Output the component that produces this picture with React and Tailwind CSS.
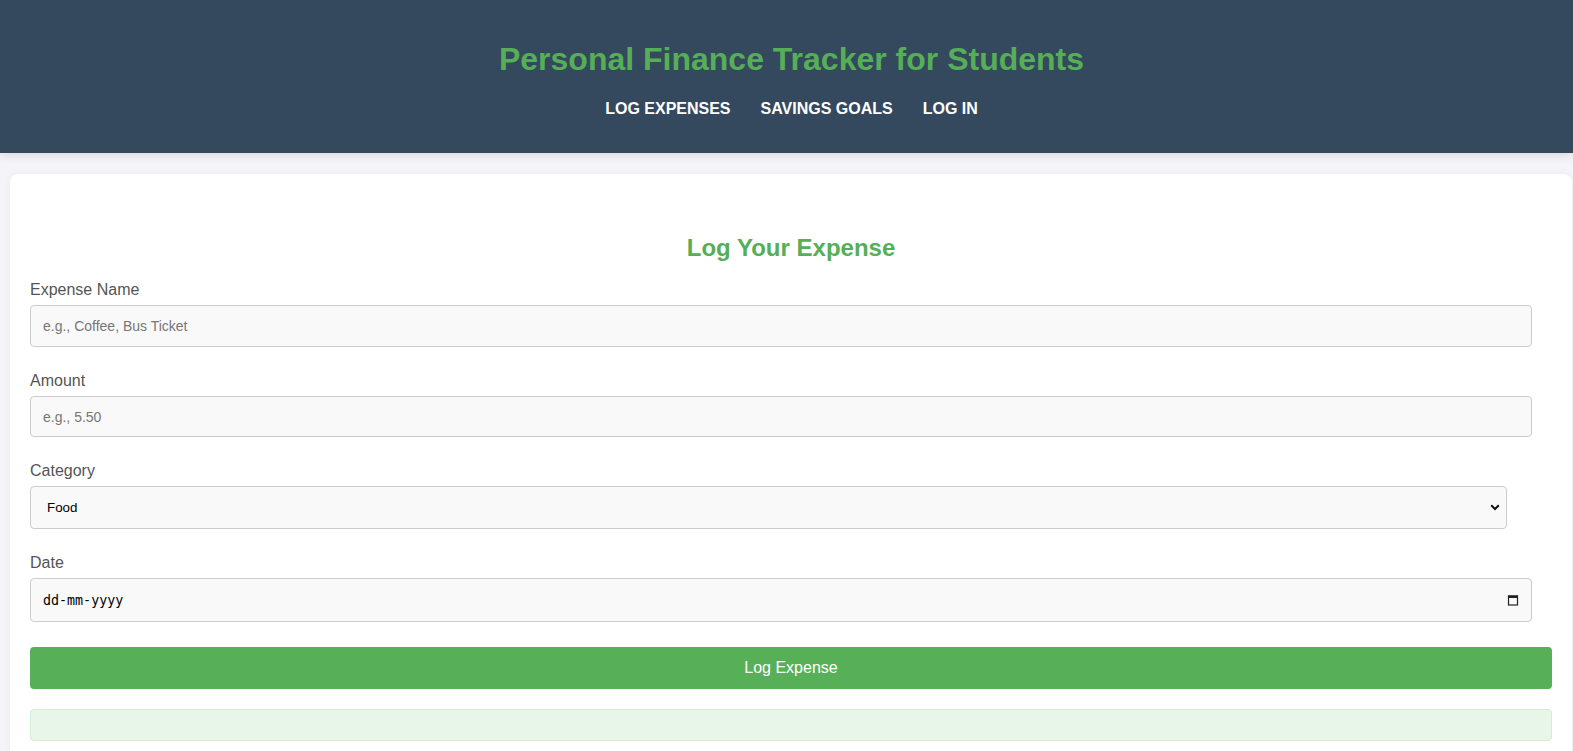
import React, { useState } from "react";

/* ================= Data ================= */

const NAV_LINKS = ["Log Expenses", "Savings Goals", "Log In"];
const CATEGORIES = ["Food", "Transport", "Entertainment", "Books", "Other"];

export default function App() {
  const [name, setName] = useState("");
  const [amount, setAmount] = useState("");
  const [category, setCategory] = useState("Food");
  const [date, setDate] = useState("");

  return (
    <div className="min-h-screen bg-[#f4f4f9] font-['Liberation_Sans',Arial,sans-serif] overflow-hidden">
      {/* ===== Header ===== */}
      <header className="relative z-10 bg-[#34495e] pt-[41px] pb-[35px] pl-[10px] text-center shadow-[0_2px_10px_rgba(0,0,0,0.12)]">
        <h1 className="text-[32px] leading-[37px] font-bold text-[#56ae57] mb-[22px]">
          Personal Finance Tracker for Students
        </h1>
        <nav className="flex justify-center gap-[30px] text-[16px] leading-[18px] font-bold uppercase text-white">
          {NAV_LINKS.map((l) => (
            <a key={l} href="#" className="text-white">
              {l}
            </a>
          ))}
        </nav>
      </header>

      {/* ===== Form Card ===== */}
      <main className="mt-[21px] ml-[10px] w-[1562px] bg-white rounded-[8px] shadow-[0_0_8px_rgba(0,0,0,0.05)] pt-[60px] pl-[20px] pr-[20px] pb-[20px]">
        <h2 className="text-center text-[24px] leading-[28px] font-bold text-[#56ae57] mb-[19px]">
          Log Your Expense
        </h2>

        <Field label="Expense Name">
          <input
            type="text"
            value={name}
            onChange={(e) => setName(e.target.value)}
            placeholder="e.g., Coffee, Bus Ticket"
            className="w-[1502px] h-[42px] px-[12px] text-[14px] bg-[#f9f9f9] border border-[#ccc] rounded-[4px] text-black placeholder:text-[#767676] outline-none"
          />
        </Field>

        <Field label="Amount">
          <input
            type="text"
            value={amount}
            onChange={(e) => setAmount(e.target.value)}
            placeholder="e.g., 5.50"
            className="w-[1502px] h-[41px] px-[12px] text-[14px] bg-[#f9f9f9] border border-[#ccc] rounded-[4px] text-black placeholder:text-[#767676] outline-none"
          />
        </Field>

        <Field label="Category">
          <div className="relative w-[1477px]">
            <select
              value={category}
              onChange={(e) => setCategory(e.target.value)}
              className="appearance-none w-full h-[43px] pl-[16px] pr-[30px] text-[13.33px] bg-[#f9f9f9] border border-[#ccc] rounded-[4px] text-black outline-none"
            >
              {CATEGORIES.map((c) => (
                <option key={c}>{c}</option>
              ))}
            </select>
            <svg
              className="absolute right-[7px] top-[18px] pointer-events-none"
              width="10"
              height="7"
              viewBox="0 0 10 7"
            >
              <path d="M1.2 1.2 L5 5 L8.8 1.2" fill="none" stroke="#111" strokeWidth="2" />
            </svg>
          </div>
        </Field>

        <Field label="Date" last>
          <div className="relative w-[1502px]">
            <input
              type="text"
              value={date}
              onChange={(e) => setDate(e.target.value)}
              placeholder="dd-mm-yyyy"
              className="w-full h-[44px] px-[12px] text-[13.33px] font-['DejaVu_Sans_Mono',monospace] bg-[#f9f9f9] border border-[#ccc] rounded-[4px] text-black placeholder:text-black outline-none"
            />
            <svg
              className="absolute right-[13px] top-[16px] pointer-events-none"
              width="12"
              height="12"
              viewBox="0 0 12 12"
            >
              <rect x="1.5" y="2" width="9" height="9" fill="none" stroke="#222" strokeWidth="1.2" />
              <rect x="1" y="1.5" width="10" height="2.5" fill="#222" />
            </svg>
          </div>
        </Field>

        <button className="w-full h-[42px] mt-[25px] bg-[#57b058] text-white text-[16px] rounded-[4px]">
          Log Expense
        </button>

        <div className="mt-[20px] h-[32px] bg-[#e8f5e9] border border-[#d0f0d4] rounded-[4px]" />
      </main>
    </div>
  );
}

/* ================= Reusable Components ================= */

function Field({ label, children, last }) {
  return (
    <div className={last ? "" : "mb-[25px]"}>
      <label className="block text-[16px] leading-[18px] text-[#555] mb-[6px]">
        {label}
      </label>
      {children}
    </div>
  );
}
